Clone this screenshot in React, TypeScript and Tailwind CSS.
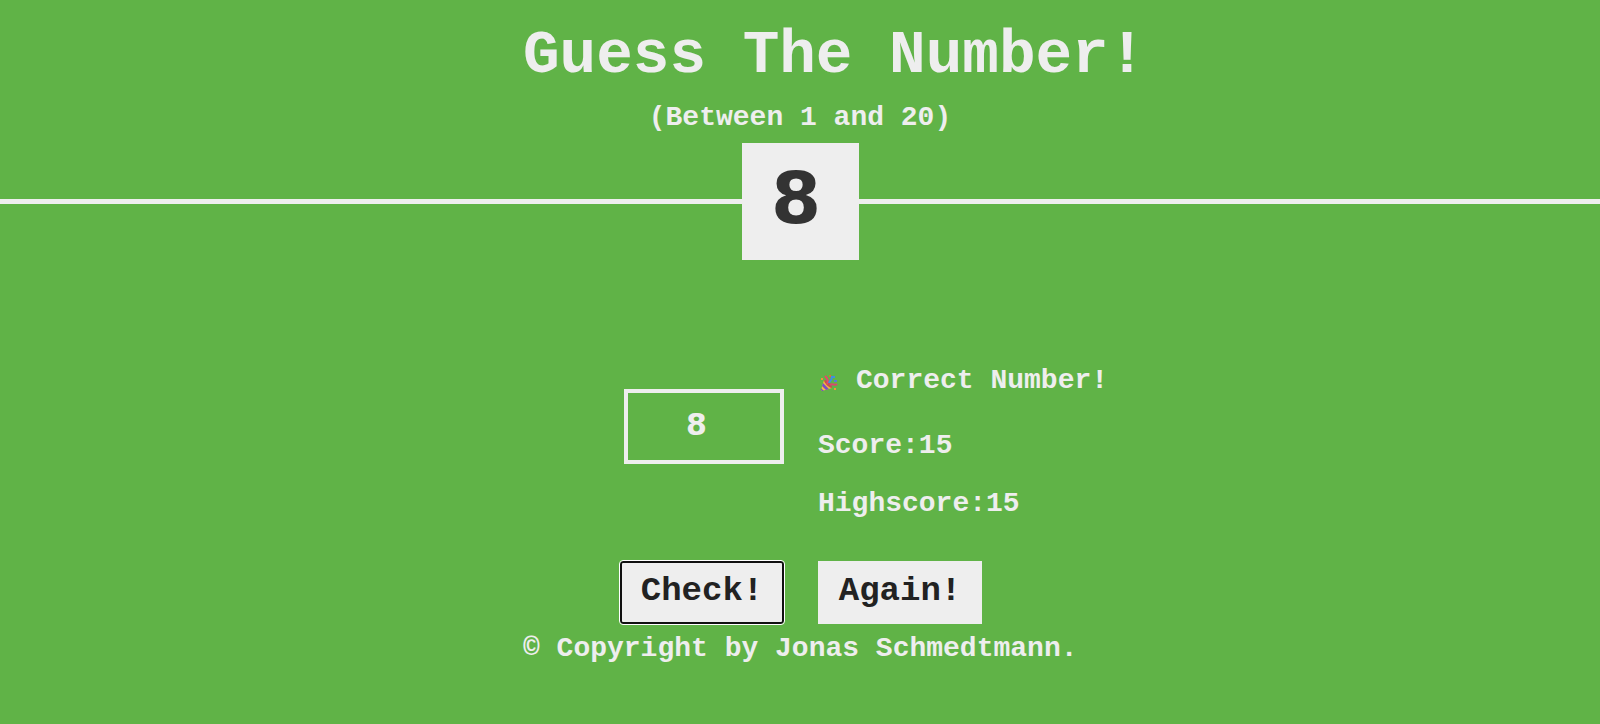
import { useState } from "react";

const SECRET = 8;

function PartyPopper() {
  return (
    <svg viewBox="0 0 18 18" className="w-[18px] h-[18px] shrink-0" aria-hidden="true">
      <path d="M4 6 L12 14 L2 17 L1 16 Z" fill="#f5b83d" />
      <path d="M3 9 L9 15 L6 16 L2 12 Z M1 14 L4 17 L2 17 L1 16 Z" fill="#7a4fc4" />
      <path d="M4 6 C8 6 12 10 12 14 C9 14 4 9 4 6 Z" fill="#c2504f" />
      <path d="M7 10 C9 7 7 4 5 2" stroke="#e8456b" strokeWidth="2" fill="none" />
      <path d="M9 9 C10 6 12 6 12 3 L15 3" stroke="#3f8fe0" strokeWidth="2" fill="none" />
      <path d="M10 11 C12 9 15 12 17 10" stroke="#d9486f" strokeWidth="2" fill="none" />
      <path d="M1 4h2v2h-2z M14 14h2v2h-2z" fill="#f58f3d" />
      <path d="M14 6h3v2h-3z" fill="#5a79d6" />
      <path d="M9 1h2v2h-2z" fill="#e0683a" />
    </svg>
  );
}

export default function App() {
  const [guess, setGuess] = useState("8");
  const [message, setMessage] = useState("Correct Number!");
  const [score, setScore] = useState(15);
  const [highscore, setHighscore] = useState(15);
  const [won, setWon] = useState(true);

  const check = () => {
    if (won) return;
    const value = Number(guess);
    if (!value) {
      setMessage("No number!");
    } else if (value === SECRET) {
      setMessage("Correct Number!");
      setWon(true);
      setHighscore(Math.max(score, highscore));
    } else {
      setMessage(value > SECRET ? "Too high!" : "Too low!");
      setScore(score - 1);
    }
  };

  const again = () => {
    setGuess("");
    setMessage("Start guessing...");
    setScore(20);
    setWon(false);
  };

  return (
    <div className={`min-h-screen text-[#eee] font-[family-name:'Liberation_Mono',monospace] font-bold text-[28px] leading-8 ${won ? "bg-[#60b347]" : "bg-[#222]"}`}>
      <header>
        <div className="w-[554px] mx-auto pt-5 whitespace-nowrap">
          <h1 className="text-[61px] leading-[72px]">Guess The Number!</h1>
          <p className="mt-[10px] text-center">(Between 1 and 20)</p>
        </div>

        {/* Secret number on the divider */}
        <div className="flex items-center mt-[9px]">
          <div className="flex-1 h-[5px] bg-[#eee]" />
          <div className="w-[117px] h-[117px] flex items-center justify-center bg-[#eee] text-[#333] font-[family-name:'DejaVu_Sans',sans-serif] text-[72px] leading-none pb-2 pr-2">
            {won ? SECRET : "?"}
          </div>
          <div className="flex-1 h-[5px] bg-[#eee]" />
        </div>
      </header>

      <main className="w-fit mx-auto mt-[105px] pl-0.5 grid grid-cols-[164px_164px] gap-x-[34px] gap-y-[41px]">
        <div className="pt-6 pl-1">
          <input
            type="number"
            aria-label="Your guess"
            value={guess}
            onChange={(e) => setGuess(e.target.value)}
            className="block w-[160px] h-[75px] border-4 border-[#eee] bg-transparent px-6 pb-1 text-center font-[family-name:'DejaVu_Sans',sans-serif] text-[30px] outline-none"
          />
        </div>
        <div className="whitespace-nowrap">
          <p className="flex items-center">
            {won && (
              <span className="w-[38px] shrink-0 pl-[2px] pt-1">
                <PartyPopper />
              </span>
            )}
            {message}
          </p>
          <p className="mt-[33px]">Score:{score}</p>
          <p className="mt-[26px]">Highscore:{highscore}</p>
        </div>

        <button
          onClick={check}
          className="h-[63px] pb-1 bg-[#eee] text-[#222] text-[34px] rounded-[3px] border-2 border-[#101010] outline outline-1 outline-white cursor-pointer"
        >
          Check!
        </button>
        <button onClick={again} className="h-[63px] pb-1 bg-[#eee] text-[#222] text-[34px] cursor-pointer">
          Again!
        </button>
      </main>

      <footer className="w-[554px] mx-auto mt-[9px] whitespace-nowrap">© Copyright by Jonas Schmedtmann.</footer>
    </div>
  );
}
